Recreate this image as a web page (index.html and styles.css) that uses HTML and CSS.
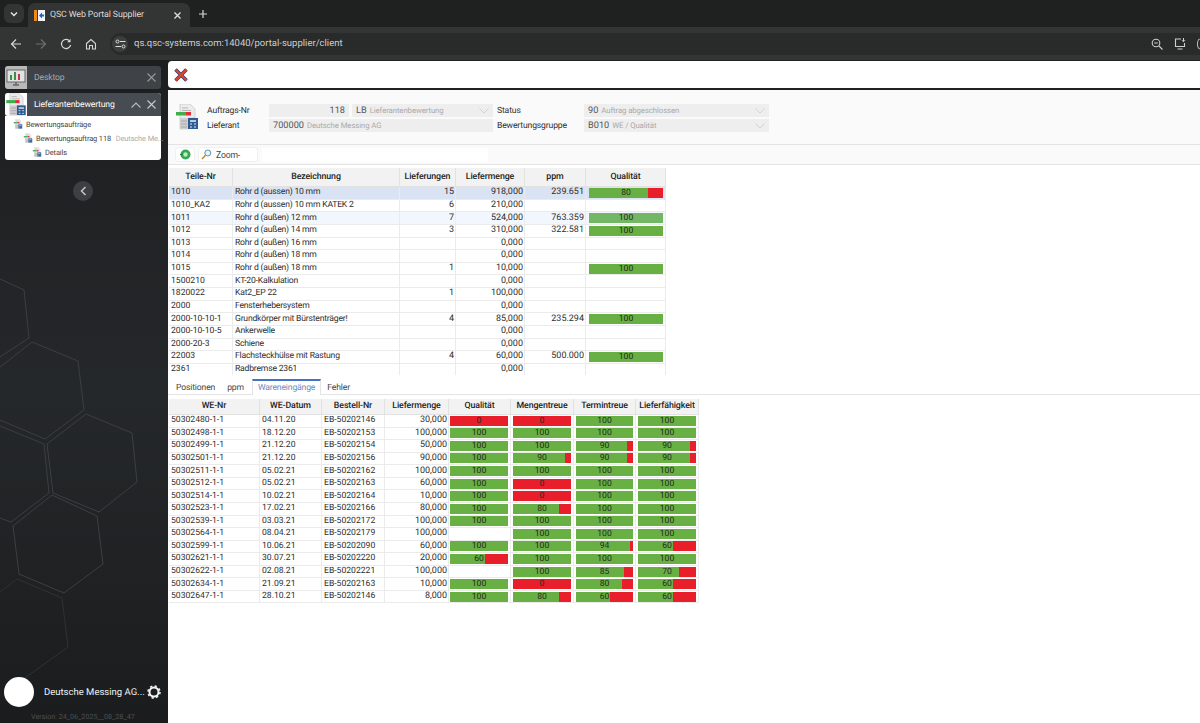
FILE: index.html
```html
<!DOCTYPE html>
<html lang="de">
<head>
    <meta charset="UTF-8">
    <title>QSC Web Portal Supplier</title>
    <link rel="stylesheet" href="styles.css">
</head>
<body>
    <svg class="defs" width="0" height="0">
        <symbol id="doc" viewBox="0 0 22 26">
            <path d="M4 0h10l5 5v9h-7v11H4z" fill="#ececec" stroke="#bdbdbd" stroke-width=".6"/>
            <path d="M6 4h6M6 6.500h9" stroke="#b5b5b5"/>
            <path d="M4 14h8v11H4z" fill="#cfcfcf"/>
            <path d="M5 17h6M5 20h6M5 23h6" stroke="#a9a9a9"/>
            <rect x="0" y="8" width="10" height="3.500" fill="#3fae4a"/>
            <rect x="10" y="8" width="5" height="3.500" fill="#e2303a"/>
            <rect x="12" y="14" width="10" height="11" fill="#2f5a92"/>
            <path d="M14 17h6" stroke="#dfe8f3" stroke-width="1.600"/>
            <path d="M14 20h2M18 20h2M14 23h2M18 23h2" stroke="#dfe8f3"/>
        </symbol>
    </svg>

    <div class="tabstrip">
        <button class="tab-search"><svg width="10" height="10" viewBox="0 0 10 10"><path d="M2 3.500l3 3 3-3" fill="none" stroke="#e6e6e6" stroke-width="1.400"/></svg></button>
        <div class="tab">
            <svg class="favicon" width="11" height="11" viewBox="0 0 11 11"><rect width="3" height="11" fill="#ee8a1d"/><rect x="4" width="7" height="11" fill="#f2f5f9"/><path d="M5 5.500l3-3v2h2v2H8v2z" fill="#2a62a8"/></svg>
            <span class="tab-title">QSC Web Portal Supplier</span>
            <svg width="9" height="9" viewBox="0 0 9 9"><path d="M1.500 1.500l6 6M7.500 1.500l-6 6" stroke="#e3e3e3" stroke-width="1.200"/></svg>
        </div>
        <svg class="new-tab" width="10" height="10" viewBox="0 0 10 10"><path d="M5 1v8M1 5h8" stroke="#d8d8d8" stroke-width="1.200"/></svg>
    </div>

    <div class="omnibar">
        <svg class="nav-icon" width="12" height="12" viewBox="0 0 12 12"><path d="M11 6H1.500M6 1.500L1.500 6 6 10.500" fill="none" stroke="#d6d6d6" stroke-width="1.200"/></svg>
        <svg class="nav-icon" width="12" height="12" viewBox="0 0 12 12"><path d="M1 6h9.500M6 1.500L10.500 6 6 10.500" fill="none" stroke="#6e6e6e" stroke-width="1.200"/></svg>
        <svg class="nav-icon" width="12" height="12" viewBox="0 0 12 12"><path d="M10 3.500A4.600 4.600 0 1 0 10.600 7" fill="none" stroke="#d6d6d6" stroke-width="1.200"/><path d="M10.500 .8v3.400H7.100" fill="#d6d6d6"/></svg>
        <svg class="nav-icon" width="12" height="12" viewBox="0 0 12 12"><path d="M1.500 5.500L6 1.500l4.500 4v5.500H7.500V7.500h-3V11H1.500z" fill="none" stroke="#d6d6d6" stroke-width="1.100"/></svg>
        <div class="address">
            <span class="site-badge"><svg width="11" height="10" viewBox="0 0 11 10"><circle cx="2.500" cy="2.500" r="1.500" fill="none" stroke="#ddd"/><path d="M5 2.500h5.500M.5 7.500H6" stroke="#ddd"/><circle cx="8.500" cy="7.500" r="1.500" fill="none" stroke="#ddd"/></svg></span>
            <span class="url">qs.qsc-systems.com:14040/portal-supplier/client</span>
            <svg class="addr-icon" width="12" height="12" viewBox="0 0 12 12"><circle cx="5" cy="5" r="3.800" fill="none" stroke="#cfcfcf" stroke-width="1.100"/><path d="M3.200 5h3.600M8 8l3.500 3.500" stroke="#cfcfcf" stroke-width="1.100"/></svg>
            <svg class="addr-icon" width="12" height="12" viewBox="0 0 12 12"><path d="M7 1H1.500v7.500h9V5M3.500 11h5" fill="none" stroke="#cfcfcf" stroke-width="1.100"/><path d="M9.500 0v3.500M8 2.200l1.500 1.500L11 2.200" fill="none" stroke="#cfcfcf"/></svg>
            <span class="avatar-edge"></span>
        </div>
    </div>

    <div class="app">
        <aside class="sidebar">
            <svg class="hexagons" width="168" height="663" viewBox="0 60 168 663">
                <g fill="none" stroke="#3c3f41">
                    <path d="M0 279L24 290 29 338 0 357"/>
                    <path d="M0 367L32 342 78 361 84 410 45 439 0 420"/>
                    <path d="M86 414L132 433 137 482 99 512 53 493 47 444z"/>
                    <path d="M0 426L44 444 49 493 11 522 0 518"/>
                    <path d="M52 495L97 516 103 564 64 593 19 574 13 526z"/>
                    <path d="M0 592L17 579 62 598 68 647 22 680" stroke="#2f3133"/>
                </g>
            </svg>

            <div class="nav-tab">
                <span class="nav-tile">
                    <svg width="20" height="18" viewBox="0 0 20 18"><rect x="1" y="1" width="18" height="12" fill="#dfe3e6" stroke="#666"/><path d="M4 11V6h2v5zM8 11V3h2v8z" fill="#3c8f45"/><path d="M12 11V5h2v6z" fill="#c9343c"/><path d="M7 16h6M10 13v3" stroke="#666" stroke-width="1.500"/></svg>
                </span>
                <span class="nav-label dim">Desktop</span>
                <svg width="9" height="9" viewBox="0 0 9 9"><path d="M.5.500l8 8M8.500.500l-8 8" stroke="#94989b" stroke-width="1.100"/></svg>
            </div>

            <div class="nav-card">
                <div class="nav-tab active">
                    <span class="nav-tile white"><svg width="20" height="23"><use href="#doc"/></svg></span>
                    <span class="nav-label">Lieferantenbewertung</span>
                    <svg width="10" height="6" viewBox="0 0 10 6"><path d="M.5 5.500L5 1l4.500 4.500" fill="none" stroke="#b9bcbe" stroke-width="1.100"/></svg>
                    <svg width="9" height="9" viewBox="0 0 9 9"><path d="M.5.500l8 8M8.500.500l-8 8" stroke="#c8cacc" stroke-width="1.100"/></svg>
                </div>
                <ul class="tree">
                    <li><svg width="10" height="10"><use href="#doc"/></svg>Bewertungsaufträge</li>
                    <li class="lvl-1"><svg width="10" height="10"><use href="#doc"/></svg>Bewertungsauftrag 118 <span class="muted">Deutsche Me...</span></li>
                    <li class="lvl-2"><svg width="10" height="10"><use href="#doc"/></svg>Details</li>
                </ul>
            </div>

            <button class="collapse"><svg width="7" height="10" viewBox="0 0 7 10"><path d="M5.500 1L1.500 5l4 4" fill="none" stroke="#c4c6c8" stroke-width="1.500"/></svg></button>

            <div class="profile">
                <span class="avatar"></span>
                <span class="profile-name">Deutsche Messing AG...</span>
                <svg width="14" height="14" viewBox="0 0 14 14"><circle cx="7" cy="7" r="4.500" fill="none" stroke="#f2f2f2" stroke-width="2"/><circle cx="7" cy="7" r="6" fill="none" stroke="#f2f2f2" stroke-width="1.500" stroke-dasharray="2.300 2.400"/></svg>
            </div>
            <div class="version">Version: 24_06_2025__08_28_47</div>
        </aside>

        <main class="content">
            <div class="topbar">
                <svg width="14" height="14" viewBox="0 0 14 14"><path d="M1.500 1.500l11 11M12.500 1.500l-11 11" stroke="#2e3f73" stroke-width="3.600"/><path d="M1.500 1.500l11 11M12.500 1.500l-11 11" stroke="#e2452f" stroke-width="2"/></svg>
            </div>

            <div class="panel">
                <section class="head-form">
                    <svg class="head-icon" width="22" height="26"><use href="#doc"/></svg>
                    <div class="form-rows">
                        <div class="form-row">
                            <label class="lbl-a">Auftrags-Nr</label>
                            <span class="field f-num">118</span>
                            <span class="field f-lb"><b>LB</b><i>Lieferantenbewertung</i><svg class="chev" width="10" height="6" viewBox="0 0 10 6"><path d="M.5.500L5 5 9.500.500" fill="none" stroke="#d2d2d2"/></svg></span>
                            <label class="lbl-b">Status</label>
                            <span class="field f-wide"><b>90</b><i>Auftrag abgeschlossen</i><svg class="chev" width="10" height="6" viewBox="0 0 10 6"><path d="M.5.500L5 5 9.500.500" fill="none" stroke="#d2d2d2"/></svg></span>
                        </div>
                        <div class="form-row">
                            <label class="lbl-a">Lieferant</label>
                            <span class="field f-sup"><b>700000</b><i>Deutsche Messing AG</i></span>
                            <label class="lbl-b">Bewertungsgruppe</label>
                            <span class="field f-wide"><b>B010</b><i>WE / Qualität</i><svg class="chev" width="10" height="6" viewBox="0 0 10 6"><path d="M.5.500L5 5 9.500.500" fill="none" stroke="#d2d2d2"/></svg></span>
                        </div>
                    </div>
                </section>

                <div class="toolrow">
                    <button class="tool tool-go"><svg width="11" height="11" viewBox="0 0 11 11"><circle cx="5.500" cy="5.500" r="5" fill="#35a852"/><circle cx="5.500" cy="5.500" r="2.200" fill="#bfe8c8"/><path d="M0 5.500h3" stroke="#1d7a38"/></svg></button>
                    <button class="tool tool-zoom"><svg width="11" height="11" viewBox="0 0 11 11"><circle cx="6.800" cy="4" r="3" fill="#e8f3f8" stroke="#5e96a6"/><path d="M4.500 6.300L1 10" stroke="#c9872d" stroke-width="1.600"/></svg>Zoom-</button>
                    <span class="tool-input"></span>
                </div>

                <div class="parts-wrap">
                    <table class="grid parts">
                        <colgroup><col class="c64"><col class="c167"><col class="c56"><col class="c69"><col class="c61"><col class="c80"></colgroup>
                        <thead><tr><th>Teile-Nr</th><th>Bezeichnung</th><th>Lieferungen</th><th>Liefermenge</th><th>ppm</th><th>Qualität</th></tr></thead>
                        <tbody>
                            <tr class="selected"><td>1010</td><td>Rohr d (aussen) 10 mm</td><td class="num">15</td><td class="num">918,000</td><td class="num">239.651</td><td class="cell-bar"><div class="bar"><span class="fill" style="width:80%"></span><em>80</em></div></td></tr>
                            <tr><td>1010_KA2</td><td>Rohr d (aussen) 10 mm KATEK 2</td><td class="num">6</td><td class="num">210,000</td><td></td><td></td></tr>
                            <tr class="hover"><td>1011</td><td>Rohr d (außen) 12 mm</td><td class="num">7</td><td class="num">524,000</td><td class="num">763.359</td><td class="cell-bar"><div class="bar"><span class="fill" style="width:100%"></span><em>100</em></div></td></tr>
                            <tr><td>1012</td><td>Rohr d (außen) 14 mm</td><td class="num">3</td><td class="num">310,000</td><td class="num">322.581</td><td class="cell-bar"><div class="bar"><span class="fill" style="width:100%"></span><em>100</em></div></td></tr>
                            <tr><td>1013</td><td>Rohr d (außen) 16 mm</td><td></td><td class="num">0,000</td><td></td><td></td></tr>
                            <tr><td>1014</td><td>Rohr d (außen) 18 mm</td><td></td><td class="num">0,000</td><td></td><td></td></tr>
                            <tr><td>1015</td><td>Rohr d (außen) 18 mm</td><td class="num">1</td><td class="num">10,000</td><td></td><td class="cell-bar"><div class="bar"><span class="fill" style="width:100%"></span><em>100</em></div></td></tr>
                            <tr><td>1500210</td><td>KT-20-Kalkulation</td><td></td><td class="num">0,000</td><td></td><td></td></tr>
                            <tr><td>1820022</td><td>Kat2_EP 22</td><td class="num">1</td><td class="num">100,000</td><td></td><td></td></tr>
                            <tr><td>2000</td><td>Fensterhebersystem</td><td></td><td class="num">0,000</td><td></td><td></td></tr>
                            <tr><td>2000-10-10-1</td><td>Grundkörper mit Bürstenträger!</td><td class="num">4</td><td class="num">85,000</td><td class="num">235.294</td><td class="cell-bar"><div class="bar"><span class="fill" style="width:100%"></span><em>100</em></div></td></tr>
                            <tr><td>2000-10-10-5</td><td>Ankerwelle</td><td></td><td class="num">0,000</td><td></td><td></td></tr>
                            <tr><td>2000-20-3</td><td>Schiene</td><td></td><td class="num">0,000</td><td></td><td></td></tr>
                            <tr><td>22003</td><td>Flachsteckhülse mit Rastung</td><td class="num">4</td><td class="num">60,000</td><td class="num">500.000</td><td class="cell-bar"><div class="bar"><span class="fill" style="width:100%"></span><em>100</em></div></td></tr>
                            <tr><td>2361</td><td>Radbremse 2361</td><td></td><td class="num">0,000</td><td></td><td></td></tr>
                        </tbody>
                    </table>
                </div>

                <nav class="tabs">
                    <a class="sub-tab">Positionen</a>
                    <a class="sub-tab">ppm</a>
                    <a class="sub-tab current">Wareneingänge</a>
                    <a class="sub-tab">Fehler</a>
                </nav>

                <table class="grid receipts">
                    <colgroup><col class="c91"><col class="c62"><col class="c63"><col class="c64"><col class="c62"><col class="c63"><col class="c62"><col class="c63"></colgroup>
                    <thead><tr><th>WE-Nr</th><th>WE-Datum</th><th>Bestell-Nr</th><th>Liefermenge</th><th>Qualität</th><th>Mengentreue</th><th>Termintreue</th><th>Lieferfähigkeit</th></tr></thead>
                    <tbody>
                        <tr><td>50302480-1-1</td><td>04.11.20</td><td>EB-50202146</td><td class="num">30,000</td><td class="cell-bar"><div class="bar"><span class="fill" style="width:0%"></span><em>0</em></div></td><td class="cell-bar"><div class="bar"><span class="fill" style="width:0%"></span><em>0</em></div></td><td class="cell-bar"><div class="bar"><span class="fill" style="width:100%"></span><em>100</em></div></td><td class="cell-bar"><div class="bar"><span class="fill" style="width:100%"></span><em>100</em></div></td></tr>
                        <tr><td>50302498-1-1</td><td>18.12.20</td><td>EB-50202153</td><td class="num">100,000</td><td class="cell-bar"><div class="bar"><span class="fill" style="width:100%"></span><em>100</em></div></td><td class="cell-bar"><div class="bar"><span class="fill" style="width:100%"></span><em>100</em></div></td><td class="cell-bar"><div class="bar"><span class="fill" style="width:100%"></span><em>100</em></div></td><td class="cell-bar"><div class="bar"><span class="fill" style="width:100%"></span><em>100</em></div></td></tr>
                        <tr><td>50302499-1-1</td><td>21.12.20</td><td>EB-50202154</td><td class="num">50,000</td><td class="cell-bar"><div class="bar"><span class="fill" style="width:100%"></span><em>100</em></div></td><td class="cell-bar"><div class="bar"><span class="fill" style="width:100%"></span><em>100</em></div></td><td class="cell-bar"><div class="bar"><span class="fill" style="width:90%"></span><em>90</em></div></td><td class="cell-bar"><div class="bar"><span class="fill" style="width:90%"></span><em>90</em></div></td></tr>
                        <tr><td>50302501-1-1</td><td>21.12.20</td><td>EB-50202156</td><td class="num">90,000</td><td class="cell-bar"><div class="bar"><span class="fill" style="width:100%"></span><em>100</em></div></td><td class="cell-bar"><div class="bar"><span class="fill" style="width:90%"></span><em>90</em></div></td><td class="cell-bar"><div class="bar"><span class="fill" style="width:90%"></span><em>90</em></div></td><td class="cell-bar"><div class="bar"><span class="fill" style="width:90%"></span><em>90</em></div></td></tr>
                        <tr><td>50302511-1-1</td><td>05.02.21</td><td>EB-50202162</td><td class="num">100,000</td><td class="cell-bar"><div class="bar"><span class="fill" style="width:100%"></span><em>100</em></div></td><td class="cell-bar"><div class="bar"><span class="fill" style="width:100%"></span><em>100</em></div></td><td class="cell-bar"><div class="bar"><span class="fill" style="width:100%"></span><em>100</em></div></td><td class="cell-bar"><div class="bar"><span class="fill" style="width:100%"></span><em>100</em></div></td></tr>
                        <tr><td>50302512-1-1</td><td>05.02.21</td><td>EB-50202163</td><td class="num">60,000</td><td class="cell-bar"><div class="bar"><span class="fill" style="width:100%"></span><em>100</em></div></td><td class="cell-bar"><div class="bar"><span class="fill" style="width:0%"></span><em>0</em></div></td><td class="cell-bar"><div class="bar"><span class="fill" style="width:100%"></span><em>100</em></div></td><td class="cell-bar"><div class="bar"><span class="fill" style="width:100%"></span><em>100</em></div></td></tr>
                        <tr><td>50302514-1-1</td><td>10.02.21</td><td>EB-50202164</td><td class="num">10,000</td><td class="cell-bar"><div class="bar"><span class="fill" style="width:100%"></span><em>100</em></div></td><td class="cell-bar"><div class="bar"><span class="fill" style="width:0%"></span><em>0</em></div></td><td class="cell-bar"><div class="bar"><span class="fill" style="width:100%"></span><em>100</em></div></td><td class="cell-bar"><div class="bar"><span class="fill" style="width:100%"></span><em>100</em></div></td></tr>
                        <tr><td>50302523-1-1</td><td>17.02.21</td><td>EB-50202166</td><td class="num">80,000</td><td class="cell-bar"><div class="bar"><span class="fill" style="width:100%"></span><em>100</em></div></td><td class="cell-bar"><div class="bar"><span class="fill" style="width:80%"></span><em>80</em></div></td><td class="cell-bar"><div class="bar"><span class="fill" style="width:100%"></span><em>100</em></div></td><td class="cell-bar"><div class="bar"><span class="fill" style="width:100%"></span><em>100</em></div></td></tr>
                        <tr><td>50302539-1-1</td><td>03.03.21</td><td>EB-50202172</td><td class="num">100,000</td><td class="cell-bar"><div class="bar"><span class="fill" style="width:100%"></span><em>100</em></div></td><td class="cell-bar"><div class="bar"><span class="fill" style="width:100%"></span><em>100</em></div></td><td class="cell-bar"><div class="bar"><span class="fill" style="width:100%"></span><em>100</em></div></td><td class="cell-bar"><div class="bar"><span class="fill" style="width:100%"></span><em>100</em></div></td></tr>
                        <tr><td>50302564-1-1</td><td>08.04.21</td><td>EB-50202179</td><td class="num">100,000</td><td></td><td class="cell-bar"><div class="bar"><span class="fill" style="width:100%"></span><em>100</em></div></td><td class="cell-bar"><div class="bar"><span class="fill" style="width:100%"></span><em>100</em></div></td><td class="cell-bar"><div class="bar"><span class="fill" style="width:100%"></span><em>100</em></div></td></tr>
                        <tr><td>50302599-1-1</td><td>10.06.21</td><td>EB-50202090</td><td class="num">60,000</td><td class="cell-bar"><div class="bar"><span class="fill" style="width:100%"></span><em>100</em></div></td><td class="cell-bar"><div class="bar"><span class="fill" style="width:100%"></span><em>100</em></div></td><td class="cell-bar"><div class="bar"><span class="fill" style="width:94%"></span><em>94</em></div></td><td class="cell-bar"><div class="bar"><span class="fill" style="width:60%"></span><em>60</em></div></td></tr>
                        <tr><td>50302621-1-1</td><td>30.07.21</td><td>EB-50202220</td><td class="num">20,000</td><td class="cell-bar"><div class="bar"><span class="fill" style="width:60%"></span><em>60</em></div></td><td class="cell-bar"><div class="bar"><span class="fill" style="width:100%"></span><em>100</em></div></td><td class="cell-bar"><div class="bar"><span class="fill" style="width:100%"></span><em>100</em></div></td><td class="cell-bar"><div class="bar"><span class="fill" style="width:100%"></span><em>100</em></div></td></tr>
                        <tr><td>50302622-1-1</td><td>02.08.21</td><td>EB-50202221</td><td class="num">100,000</td><td></td><td class="cell-bar"><div class="bar"><span class="fill" style="width:100%"></span><em>100</em></div></td><td class="cell-bar"><div class="bar"><span class="fill" style="width:85%"></span><em>85</em></div></td><td class="cell-bar"><div class="bar"><span class="fill" style="width:70%"></span><em>70</em></div></td></tr>
                        <tr><td>50302634-1-1</td><td>21.09.21</td><td>EB-50202163</td><td class="num">10,000</td><td class="cell-bar"><div class="bar"><span class="fill" style="width:100%"></span><em>100</em></div></td><td class="cell-bar"><div class="bar"><span class="fill" style="width:0%"></span><em>0</em></div></td><td class="cell-bar"><div class="bar"><span class="fill" style="width:80%"></span><em>80</em></div></td><td class="cell-bar"><div class="bar"><span class="fill" style="width:60%"></span><em>60</em></div></td></tr>
                        <tr><td>50302647-1-1</td><td>28.10.21</td><td>EB-50202146</td><td class="num">8,000</td><td class="cell-bar"><div class="bar"><span class="fill" style="width:100%"></span><em>100</em></div></td><td class="cell-bar"><div class="bar"><span class="fill" style="width:80%"></span><em>80</em></div></td><td class="cell-bar"><div class="bar"><span class="fill" style="width:60%"></span><em>60</em></div></td><td class="cell-bar"><div class="bar"><span class="fill" style="width:60%"></span><em>60</em></div></td></tr>
                    </tbody>
                </table>
            </div>
        </main>
    </div>
</body>
</html>
```
FILE: styles.css
```css
* {
    box-sizing: border-box;
}
body {
    margin: 0;
    height: 723px;
    display: flex;
    flex-direction: column;
    overflow: hidden;
    background-color: #1f2122;
    font-family: Roboto, "Liberation Sans", sans-serif;
    font-size: 8.600px;
    letter-spacing: -0.150px;
    text-rendering: geometricPrecision;
    color: #2e2e2e;
}
button {
    padding: 0;
    border: 0;
    font: inherit;
    letter-spacing: inherit;
}
svg {
    flex: none;
}
.defs {
    position: absolute;
}

/* browser chrome */
.tabstrip {
    height: 27px;
    flex: none;
    display: flex;
    align-items: flex-end;
    padding-left: 4px;
    background-color: #1f2020;
}
.tab-search {
    width: 20px;
    height: 19px;
    margin-bottom: 4px;
    display: flex;
    align-items: center;
    justify-content: center;
    border-radius: 6px;
    background-color: #333434;
}
.tab {
    width: 162px;
    height: 24px;
    margin-left: 4px;
    padding: 0 8px 0 6px;
    display: flex;
    align-items: center;
    border-radius: 7px 7px 0 0;
    background-color: #333434;
    color: #dcdcdc;
    font-size: 8.800px;
    letter-spacing: -0.100px;
}
.tab-title {
    flex: 1;
    margin-left: 5px;
}
.new-tab {
    margin: 0 0 8px 8px;
}
.omnibar {
    height: 33px;
    flex: none;
    display: flex;
    align-items: center;
    padding-left: 10px;
    background-color: #333434;
}
.nav-icon {
    margin-right: 13px;
}
.address {
    flex: 1;
    height: 22px;
    padding-left: 2px;
    display: flex;
    align-items: center;
    border-radius: 11px 0 0 11px;
    background-color: #292a2a;
}
.site-badge {
    width: 16px;
    height: 16px;
    display: flex;
    align-items: center;
    justify-content: center;
    border-radius: 50%;
    background-color: #3c3d3d;
}
.url {
    flex: 1;
    margin-left: 6px;
    color: #c9d0d6;
    font-size: 9.500px;
    letter-spacing: 0;
}
.addr-icon {
    margin-right: 11px;
}
.avatar-edge {
    width: 5px;
    height: 12px;
    margin-right: -2px;
    border: 1px solid #bbb;
    border-right: 0;
    border-radius: 6px 0 0 6px;
}

/* left column */
.app {
    flex: 1;
    display: flex;
    min-height: 0;
}
.sidebar {
    position: relative;
    width: 168px;
    flex: none;
    padding: 6px 7px 0 5px;
    display: flex;
    flex-direction: column;
    background: linear-gradient(#1d1e20 0, #25282a 50%, #1b1c1e 100%);
}
.hexagons {
    position: absolute;
    top: 0;
    left: 0;
}
.nav-tab {
    position: relative;
    height: 23px;
    display: flex;
    align-items: center;
    gap: 6px;
    padding-right: 5px;
    border-radius: 3px;
    background-color: #3f4347;
    color: #fff;
}
.nav-tile {
    width: 22px;
    height: 23px;
    display: flex;
    align-items: center;
    justify-content: center;
    border-radius: 3px 0 0 3px;
    background-color: #b9b9b9;
}
.nav-tile.white {
    background-color: #fff;
}
.nav-label {
    flex: 1;
    margin-left: 1px;
}
.nav-label.dim {
    color: #a6a9ab;
}
.nav-card {
    position: relative;
    margin-top: 4px;
    height: 67px;
    border-radius: 3px;
    background-color: #fff;
}
.nav-tab.active {
    background-color: #474c52;
    border-radius: 3px 3px 0 0;
}
.tree {
    margin: 0;
    padding: 1px 0 0 8px;
    list-style: none;
    font-size: 7.400px;
    letter-spacing: -0.100px;
    color: #444;
}
.tree li {
    height: 14px;
    display: flex;
    align-items: center;
    gap: 3px;
    white-space: pre;
}
.tree .lvl-1 {
    padding-left: 10px;
}
.tree .lvl-2 {
    padding-left: 19px;
}
.muted {
    color: #aaa;
}
.collapse {
    position: relative;
    width: 20px;
    height: 20px;
    margin: 21px 0 0 68px;
    display: flex;
    align-items: center;
    justify-content: center;
    border-radius: 50%;
    background-color: #3d4043;
}
.profile {
    position: relative;
    margin: auto 0 0 -1px;
    height: 30px;
    display: flex;
    align-items: center;
}
.avatar {
    width: 30px;
    height: 30px;
    border-radius: 50%;
    background-color: #fff;
}
.profile-name {
    flex: 1;
    margin-left: 10px;
    color: #eef2f5;
    font-size: 9.500px;
    letter-spacing: 0;
    white-space: nowrap;
}
.version {
    position: relative;
    height: 12px;
    margin-top: 4px;
    padding-left: 26px;
    color: #4d5053;
    font-size: 7.200px;
    letter-spacing: 0;
    line-height: 12px;
}

/* main area */
.content {
    flex: 1;
    min-width: 0;
    display: flex;
    flex-direction: column;
}
.topbar {
    height: 27px;
    margin-top: 1px;
    padding-left: 6px;
    flex: none;
    display: flex;
    align-items: center;
    border-radius: 4px 0 0 4px;
    background-color: #fff;
}
.panel {
    flex: 1;
    margin-top: 2px;
    border-radius: 3px 0 0 0;
    background-color: #fff;
}
.head-form {
    height: 55px;
    display: flex;
    align-items: flex-start;
    padding: 14px 0 0 8px;
    background-color: #fafafa;
    border-bottom: 1px solid #e4e4e4;
}
.form-rows {
    margin-left: 9px;
    display: flex;
    flex-direction: column;
    gap: 2px;
}
.form-row {
    height: 13px;
    display: flex;
    align-items: center;
}
.lbl-a {
    width: 62px;
}
.lbl-b {
    width: 87px;
    margin-left: 4px;
}
.field {
    height: 13px;
    display: flex;
    align-items: center;
    padding: 0 4px;
    background-color: #eeeeee;
    color: #555;
    font-size: 9.200px;
    letter-spacing: 0;
}
.field b {
    font-weight: 400;
}
.field i {
    margin-left: 3px;
    font-style: normal;
    font-size: 7.800px;
    letter-spacing: -0.100px;
    color: #aaa;
}
.chev {
    margin-left: auto;
}
.f-num {
    width: 80px;
    justify-content: flex-end;
}
.f-lb {
    width: 141px;
    margin-left: 3px;
}
.f-sup {
    width: 224px;
}
.f-wide {
    width: 185px;
}
.toolrow {
    height: 20px;
    display: flex;
    align-items: center;
    gap: 3px;
    padding-left: 7px;
    border-bottom: 1px solid #e4e4e4;
    background-color: #fafafa;
}
.tool {
    height: 15px;
    display: flex;
    align-items: center;
    justify-content: center;
    gap: 4px;
    border: 1px solid #f0f0f0;
    border-radius: 3px;
    background-color: #fff;
    color: #444;
}
.tool-go {
    width: 20px;
}
.tool-zoom {
    width: 60px;
    justify-content: flex-start;
    padding-left: 2px;
}
.tool-input {
    width: 226px;
    height: 14px;
    margin-left: 1px;
    background-color: #fff;
}

/* tables */
.parts-wrap {
    height: 207px;
    margin-top: 3px;
    overflow: hidden;
}
.grid {
    margin-left: 1px;
    table-layout: fixed;
    border-collapse: separate;
    border-spacing: 0;
    line-height: 11px;
}
.parts {
    width: 497px;
}
.receipts {
    width: 530px;
    margin-top: 4px;
}
.c56 { width: 56px; }
.c61 { width: 61px; }
.c62 { width: 62px; }
.c63 { width: 63px; }
.c64 { width: 64px; }
.c69 { width: 69px; }
.c80 { width: 80px; }
.c91 { width: 91px; }
.c167 { width: 167px; }
.grid th {
    padding: 0;
    font-size: 8.800px;
    font-weight: 500;
    letter-spacing: -0.100px;
    background-color: #f2f2f2;
    border-right: 1px solid #e2e2e2;
    border-bottom: 1px solid #e2e2e2;
    color: #222;
}
.parts thead tr {
    height: 19px;
}
.receipts thead tr {
    height: 16px;
}
.parts tbody tr {
    height: 12.640px;
}
.receipts tbody tr {
    height: 12.570px;
}
.grid td {
    padding: 0 1px 0 2px;
    border-right: 1px solid #ebebeb;
    border-bottom: 1px solid #ebebeb;
    white-space: nowrap;
    overflow: hidden;
    letter-spacing: 0;
}
.parts td:nth-child(2) {
    letter-spacing: -0.200px;
}
.grid td.num {
    font-size: 9px;
    text-align: right;
}
.grid .selected td {
    background-color: #d9e3f3;
}
.grid .hover td {
    background-color: #f2f6fd;
}
.grid td.cell-bar {
    padding: 0 2px;
}
.parts td.cell-bar {
    padding-left: 3px;
}
.receipts td:nth-child(5) {
    padding-left: 1px;
}
.bar {
    position: relative;
    height: 10px;
    background-color: #e81f2b;
    text-align: center;
    line-height: 10px;
}
.fill {
    position: absolute;
    top: 0;
    bottom: 0;
    left: 0;
    background-color: #69b044;
}
.hover .fill {
    background-color: #72b666;
}
.bar em {
    position: relative;
    font-style: normal;
    color: #232d1c;
}

/* sub tabs */
.tabs {
    height: 15px;
    margin-top: 5px;
    display: flex;
    padding-left: 2px;
    border-bottom: 1px solid #e4e4e4;
}
.sub-tab {
    padding: 3px 6px 0;
    color: #444;
}
.current {
    height: 16px;
    margin: -1px 0 0 2px;
    padding: 2px 5px 0;
    border-top: 2px solid #4472c4;
    border-left: 1px solid #e4e4e4;
    border-right: 1px solid #e4e4e4;
    background-color: #fff;
    color: #7189b8;
}
```
